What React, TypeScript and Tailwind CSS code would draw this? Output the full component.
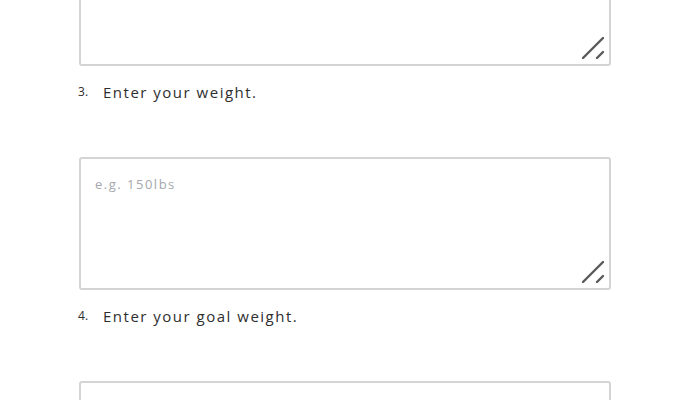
import React from "react"

type Question = {
  num: number
  label: string
  placeholder: string
}

const questions: Question[] = [
  { num: 3, label: "Enter your weight.", placeholder: "e.g. 150lbs" },
  { num: 4, label: "Enter your goal weight.", placeholder: "e.g. 130lbs" },
]

function Box({ placeholder }: { placeholder?: string }) {
  return (
    <div className="relative">
      <textarea
        placeholder={placeholder}
        className="block w-full h-[133px] resize-none border-2 border-[#d4d4d4] rounded-[3px] bg-white px-[14px] py-[16px] text-[13px] tracking-[1.5px] text-[#333] placeholder:text-[#a4a7ad] outline-none"
        style={{ fontFamily: '"Open Sans", sans-serif' }}
      />
      {/* resize grip */}
      <svg className="absolute right-[6px] bottom-[6px] pointer-events-none" width="24" height="24" viewBox="0 0 24 24">
        <path d="M2 22 L22 2" stroke="#595959" strokeWidth="2.4" strokeLinecap="round" />
        <path d="M16 22 L22 16" stroke="#595959" strokeWidth="2.4" strokeLinecap="round" />
      </svg>
    </div>
  )
}

export default function App() {
  return (
    <div className="w-[700px] h-[400px] overflow-hidden bg-white" style={{ fontFamily: '"Open Sans", sans-serif' }}>
      <div className="ml-[79px] w-[532px] -mt-[67px]">
        <Box />
        {questions.map((q) => (
          <div key={q.num}>
            <div className="flex items-center mt-[16px] mb-[55px] h-[20px] text-[15px] text-[#2e2e2e] tracking-[1.5px]">
              <span className="w-[25px] -ml-[1px] text-[12px] tracking-normal">{q.num}.</span>
              <span>{q.label}</span>
            </div>
            <Box placeholder={q.placeholder} />
          </div>
        ))}
      </div>
    </div>
  )
}
